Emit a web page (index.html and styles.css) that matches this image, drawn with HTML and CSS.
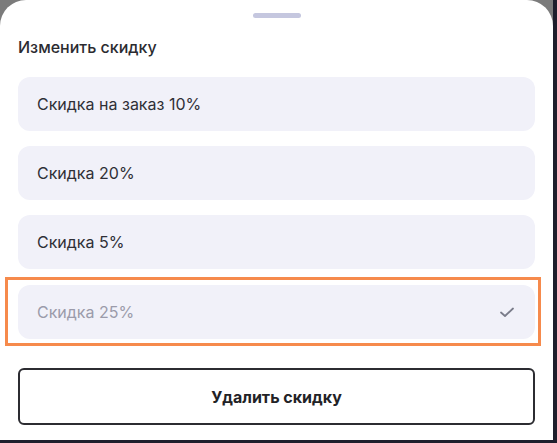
FILE: index.html
```html
<!DOCTYPE html>
<html lang="ru">
<head>
<meta charset="utf-8">
<link rel="stylesheet" href="styles.css">
</head>
<body>
<div class="screen">
  <div class="sheet">
    <div class="handle"></div>
    <h2 class="title">Изменить скидку</h2>
    <div class="options">
      <div class="option">Скидка на заказ 10%</div>
      <div class="option">Скидка 20%</div>
      <div class="option">Скидка 5%</div>
      <div class="highlight">
        <div class="option selected">
          <span>Скидка 25%</span>
          <svg class="check" width="16" height="12" viewBox="0 0 16 12"><path d="M2 6.5 L6 10 L14 2.5" fill="none" stroke="#7a7c8a" stroke-width="1.8" stroke-linecap="round" stroke-linejoin="round"/></svg>
        </div>
      </div>
    </div>
    <button class="remove">Удалить скидку</button>
  </div>
</div>
</body>
</html>
```

FILE: styles.css
```css
html, body {
  margin: 0;
  padding: 0;
}
body {
  background: #1e1e2c;
  width: 557px;
  height: 443px;
  overflow: hidden;
  font-family: Inter, "Noto Sans", sans-serif;
}
.screen {
  width: 553px;
  height: 440px;
  background: #7b7b7b;
}
.sheet {
  height: 100%;
  background: #ffffff;
  border-radius: 26px 26px 0 0;
  box-sizing: border-box;
  padding: 13px 18px 0 18px;
  display: flex;
  flex-direction: column;
}
.handle {
  align-self: center;
  width: 48px;
  height: 5px;
  border-radius: 3px;
  background: #c5c7df;
}
.title {
  margin: 19px 0 0 0;
  font-size: 16px;
  font-weight: 500;
  line-height: 20px;
  color: #2b2b30;
}
.options {
  margin-top: 20px;
  display: flex;
  flex-direction: column;
  gap: 15px;
}
.option {
  height: 54px;
  border-radius: 12px;
  background: #f1f1f9;
  display: flex;
  align-items: center;
  justify-content: space-between;
  padding: 0 20px 0 19px;
  font-size: 16px;
  color: #2f2f36;
}
.highlight {
  margin: -7px -6px 0 -13px;
  border: 3px solid #f68a4c;
  padding: 5px 3px 4px 10px;
}
.option.selected {
  color: #9b9baa;
}
.check {
  display: block;
}
.remove {
  margin-top: 22px;
  height: 57px;
  border: 2px solid #2c2c31;
  border-radius: 6px;
  background: #fff;
  font-family: Inter, "Noto Sans", sans-serif;
  font-size: 16px;
  font-weight: 700;
  color: #222226;
}
```
